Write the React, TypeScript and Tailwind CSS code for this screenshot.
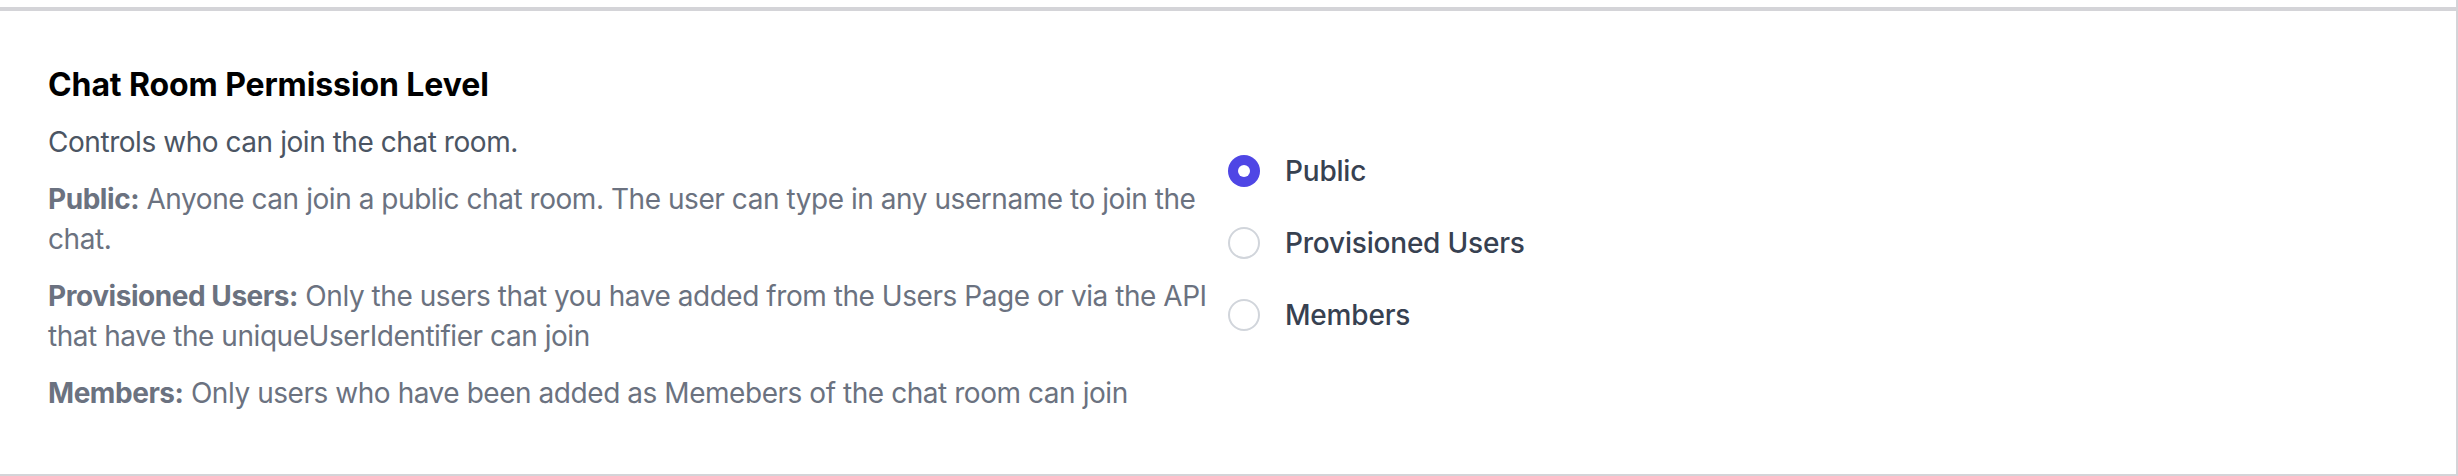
import React, { useState } from 'react';

const options = [
  { id: 'public', label: 'Public' },
  { id: 'provisioned', label: 'Provisioned Users' },
  { id: 'members', label: 'Members' },
];

export default function App() {
  const [level, setLevel] = useState('public');

  return (
    <div className="h-[476px] bg-white pt-[7px] border-r-2 border-[#d4d4d8] flex flex-col font-['Inter',sans-serif]">
      <div className="flex-1 flex border-t-4 border-b-2 border-[#d4d4d8] px-[48px] pt-[52px]">
        <div className="w-1/2 flex flex-col gap-[17px] text-[28px] leading-[40px] tracking-[-0.45px]">
          <h3 className="text-[32px] leading-[44px] font-bold text-black tracking-[-0.1px]">Chat Room Permission Level</h3>
          <p className="text-[#4b5563] -mt-[2px]">Controls who can join the chat room.</p>
          <p className="text-[#6b7280]">
            <span className="font-bold">Public:</span> Anyone can join a public chat room. The user can type in any
            username to join the chat.
          </p>
          <p className="text-[#6b7280]">
            <span className="font-bold">Provisioned Users:</span> Only the users that you have added from the Users Page
            or via the API that have the uniqueUserIdentifier can join
          </p>
          <p className="text-[#6b7280]">
            <span className="font-bold">Members:</span> Only users who have been added as Memebers of the chat room can
            join
          </p>
        </div>

        <div className="w-1/2 pt-[88px]">
          <div className="flex flex-col gap-[32px]">
            {options.map((opt) => {
              const checked = level === opt.id;
              return (
                <label key={opt.id} className="flex items-center cursor-pointer">
                  <input
                    type="radio"
                    name="permission"
                    className="sr-only"
                    checked={checked}
                    onChange={() => setLevel(opt.id)}
                  />
                  <span
                    className={
                      checked
                        ? 'w-[32px] h-[32px] rounded-full bg-[#4f46e5] flex items-center justify-center'
                        : 'w-[32px] h-[32px] rounded-full border-2 border-[#d1d5db] bg-white'
                    }
                  >
                    {checked && <span className="w-[12px] h-[12px] rounded-full bg-white" />}
                  </span>
                  <span className="ml-[25px] text-[28px] leading-[40px] font-medium text-[#374151] tracking-[-0.2px]">
                    {opt.label}
                  </span>
                </label>
              );
            })}
          </div>
        </div>
      </div>
    </div>
  );
}
